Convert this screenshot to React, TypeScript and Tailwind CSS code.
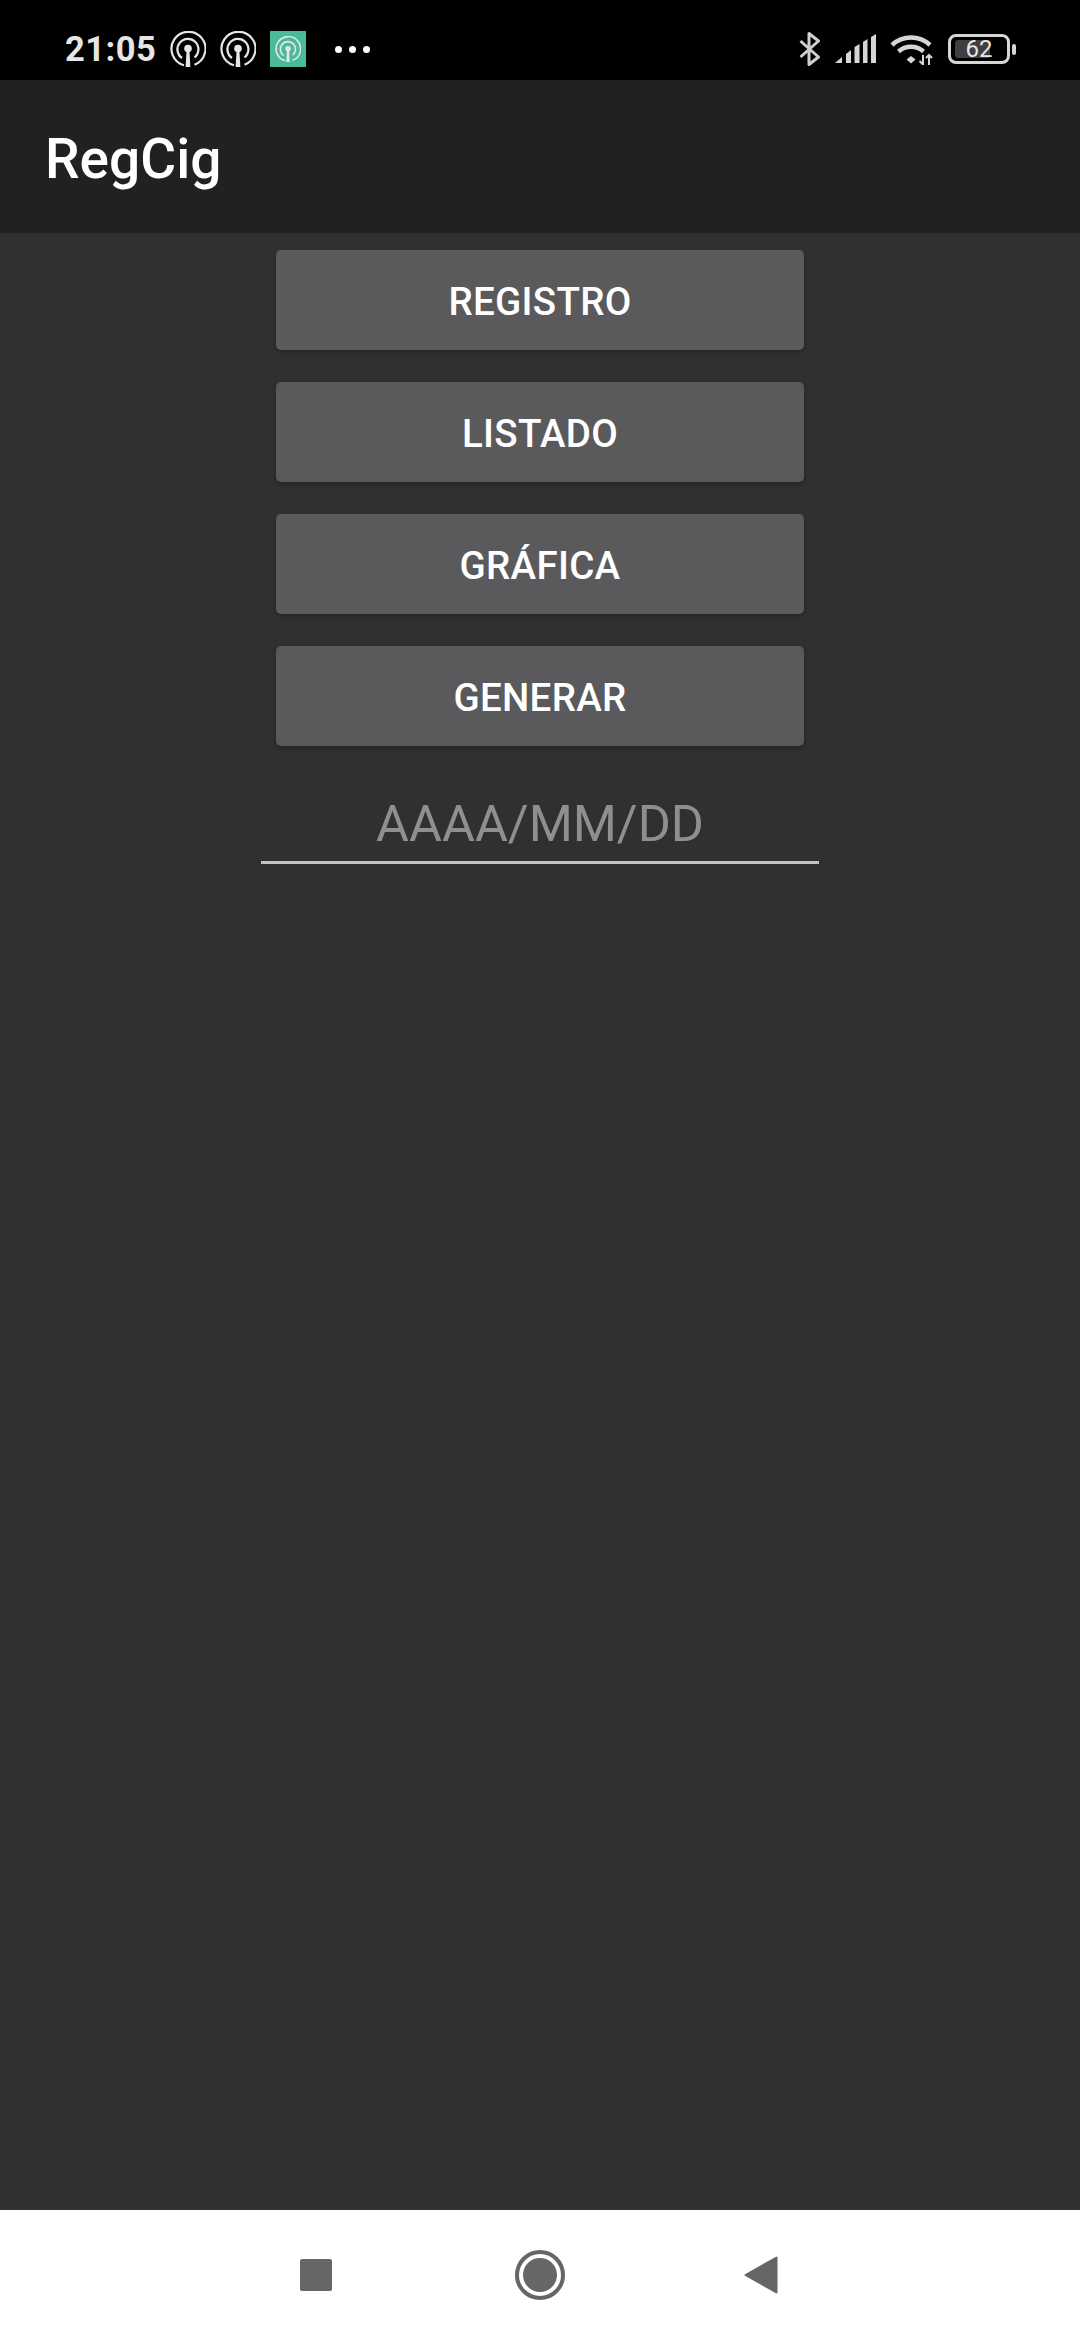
import React from "react";

function Broadcast({ small = false }: { small?: boolean }) {
  return (
    <svg viewBox="0 0 36 36" className={small ? "w-[26px] h-[26px]" : "w-[36px] h-[36px]"} fill="none" stroke="#e6e6e6">
      <path d="M14 34.2 A17 17 0 1 1 24.5 33.7" strokeWidth="2.2" />
      <path d="M12 27 A10.5 10.5 0 1 1 24.5 26.5" strokeWidth="2.2" />
      <circle cx="18" cy="17.5" r="3.8" fill="#e6e6e6" stroke="none" />
      <path d="M16.6 19 H19.4 L20.4 36 H15.6 Z" fill="#e6e6e6" stroke="none" />
    </svg>
  );
}

function Bluetooth() {
  return (
    <svg viewBox="0 0 22 34" className="w-[22px] h-[34px]" fill="none" stroke="#cfcfcf" strokeWidth="3">
      <path d="M1.5 9 L19.5 25 L10 32.5 V1.5 L19.5 9 L1.5 25" strokeLinejoin="round" />
    </svg>
  );
}

function Signal() {
  return (
    <svg viewBox="0 0 41 30" className="w-[41px] h-[30px]" fill="#d6d6d6">
      <path d="M0 29 L7 23 V29 Z" />
      <path d="M11 20 L16 16 V29 H11 Z" />
      <path d="M19.5 13 L24.5 10 V29 H19.5 Z" />
      <path d="M28 8 L32.5 5 V29 H28 Z" />
      <path d="M36 3 L41 0 V29 H36 Z" />
    </svg>
  );
}

function Wifi() {
  return (
    <svg viewBox="0 0 44 32" className="w-[44px] h-[32px]" fill="none" stroke="#d6d6d6" strokeWidth="4.5">
      <path d="M2 12 A28 28 0 0 1 40 12" />
      <path d="M8.5 18.5 A19 19 0 0 1 33.5 18.5" />
      <path d="M16.5 26.5 L21 23 L25.5 26.5 L21 30.5 Z" fill="#d6d6d6" stroke="none" />
      <path d="M33 22 V32 M29.5 28 L33 31.5 M39 22 V32 M36 25 L39 22 L42 25" strokeWidth="2" />
    </svg>
  );
}

function Battery() {
  return (
    <div className="flex items-center">
      <div className="relative w-[62px] h-[30px] rounded-[8px] border-[3px] border-[#d6d6d6] flex items-center justify-center">
        <div className="absolute left-[4px] top-[3px] bottom-[3px] w-[35px] rounded-[3px] bg-[#3f3f3f]" />
        <span className="relative text-[24px] leading-none font-normal text-[#e6e6e6]">62</span>
      </div>
      <div className="ml-[2px] w-[4px] h-[11px] rounded-[2px] bg-[#d6d6d6]" />
    </div>
  );
}

function MainButton({ label }: { label: string }) {
  return (
    <button className="w-[528px] h-[100px] pt-[4px] rounded-[5px] bg-[#5a5a5c] shadow-[0_2px_5px_rgba(0,0,0,0.25)] text-white text-[38.5px] font-medium tracking-[0.3px] uppercase flex items-center justify-center">
      {label}
    </button>
  );
}

export default function App() {
  return (
    <div className="w-[1080px] h-[2340px] flex flex-col bg-[#303030] font-['Roboto',sans-serif]">
      <div className="h-[80px] bg-black flex items-center pt-[18px] pl-[65px] pr-[64px] shrink-0">
        <span className="pt-[2px] text-[34.5px] font-bold tracking-[0.5px] text-[#e6e6e6] w-[105px]">21:05</span>
        <div className="flex items-center gap-[14px] ml-0">
          <Broadcast />
          <Broadcast />
          <div className="w-[36px] h-[36px] bg-[#4abb98] flex items-center justify-center">
            <Broadcast small />
          </div>
        </div>
        <div className="flex items-center gap-[7px] ml-[29px]">
          <div className="w-[7px] h-[7px] rounded-full bg-white" />
          <div className="w-[7px] h-[7px] rounded-full bg-white" />
          <div className="w-[7px] h-[7px] rounded-full bg-white" />
        </div>
        <div className="ml-auto flex items-center gap-[14px]">
          <Bluetooth />
          <Signal />
          <Wifi />
          <Battery />
        </div>
      </div>

      <div className="h-[153px] pt-[5px] bg-[#212121] flex items-center pl-[45px] shrink-0">
        <h1 className="text-[55px] font-medium text-white leading-none">RegCig</h1>
      </div>

      <div className="flex-1 flex flex-col items-center pt-[17px]">
        <div className="flex flex-col gap-[32px]">
          <MainButton label="REGISTRO" />
          <MainButton label="LISTADO" />
          <MainButton label="GRÁFICA" />
          <MainButton label="GENERAR" />
        </div>
        <div className="w-[558px] h-[118px] border-b-[3px] border-[#c4c4c4] flex items-end justify-center pb-[5px] text-[50.5px] leading-[64px] text-[#8f8f8f]">
          AAAA/MM/DD
        </div>
      </div>

      <div className="h-[130px] bg-white shrink-0 flex items-center justify-center">
        <div className="w-[32px] h-[32px] rounded-[2px] bg-[#666666]" />
        <div className="ml-[183px] w-[50px] h-[50px] rounded-full border-[4px] border-[#666666] flex items-center justify-center">
          <div className="w-[34px] h-[34px] rounded-full bg-[#666666]" />
        </div>
        <svg viewBox="0 0 34 38" className="ml-[179px] mr-[3px] w-[34px] h-[38px]" fill="#666666" stroke="#666666" strokeWidth="2" strokeLinejoin="round">
          <path d="M1.5 19 L32.5 1.5 V36.5 Z" />
        </svg>
      </div>
    </div>
  );
}
